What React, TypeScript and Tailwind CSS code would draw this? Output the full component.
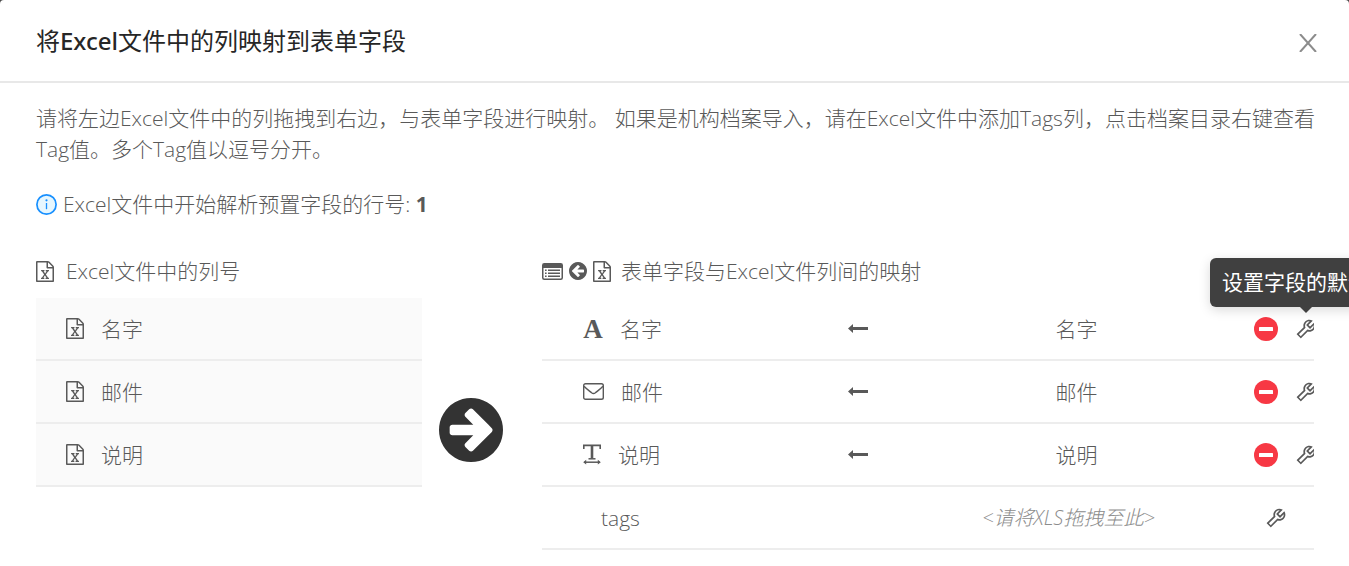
import { ReactNode } from 'react'
import { AiOutlineTool } from 'react-icons/ai'

interface MappingRow {
  id: string
  label: string
  value: string
  icon: ReactNode
}

function ExcelIcon() {
  return (
    <svg viewBox="128 0 1536 1792" className="h-[21px] w-[18px] shrink-0" fill="currentColor" aria-hidden="true">
      <path d="M1596 380q28 28 48 76t20 88v1152q0 40-28 68t-68 28h-1344q-40 0-68-28t-28-68v-1600q0-40 28-68t68-28h896q40 0 88 20t76 48zm-444-244v376h376q-10-29-22-41l-313-313q-12-12-41-22zm384 1528v-1024h-416q-40 0-68-28t-28-68v-416h-768v1536h1280zm-979-234v106h281v-106h-75l103-161q5-7 10-16.5t7.5-13.5 3.5-4h2q1 4 5 10 2 4 4.5 7.5t6 8 6.5 8.5l107 161h-76v106h291v-106h-68l-192-273 195-282h67v-107h-279v107h74l-103 159q-4 7-10 16.5t-9 13.5l-2 3h-2q-1-4-5-10-6-11-17-23l-106-159h76v-107h-290v107h68l189 272-194 283h-68z" />
    </svg>
  )
}

function CircleArrowIcon({ className }: { className: string }) {
  return (
    <svg viewBox="128 128 1536 1536" className={className} fill="currentColor" aria-hidden="true">
      <path d="M1413 896q0-27-18-45l-91-91-362-362q-18-18-45-18t-45 18l-91 91q-18 18-18 45t18 45l189 189h-502q-26 0-45 19t-19 45v128q0 26 19 45t45 19h502l-189 189q-19 19-19 45t19 45l91 91q18 18 45 18t45-18l362-362 91-91q18-18 18-45zm251 0q0 209-103 385.5t-279.5 279.5-385.5 103-385.5-103-279.5-279.5-103-385.5 103-385.5 279.5-279.5 385.5-103 385.5 103 279.5 279.5 103 385.5z" />
    </svg>
  )
}

function ListIcon() {
  return (
    <svg viewBox="0 0 21 17" className="h-[17px] w-[21px] shrink-0" fill="none" stroke="currentColor" aria-hidden="true">
      <rect x="0.75" y="0.75" width="19.5" height="15.5" rx="1.5" strokeWidth="1.5" />
      <path d="M1 1h19v4H1z" fill="currentColor" stroke="none" />
      <path d="M3 7.2h1.6M3 10.2h1.6M3 13.2h1.6M6 7.2h12M6 10.2h12M6 13.2h12" strokeWidth="1.4" />
    </svg>
  )
}

function InfoIcon() {
  return (
    <svg viewBox="0 0 21 21" className="h-[21px] w-[21px] shrink-0" aria-hidden="true">
      <circle cx="10.5" cy="10.5" r="9.6" fill="#e6f7ff" stroke="#1890ff" strokeWidth="1.7" />
      <path d="M10.5 9v6.2" stroke="#1890ff" strokeWidth="1.3" />
      <circle cx="10.5" cy="6.3" r="1.1" fill="#1890ff" />
    </svg>
  )
}

function LetterIcon() {
  return (
    <span className="w-5 text-center font-['Liberation_Serif',serif] text-[27px] leading-6 font-bold" aria-hidden="true">
      A
    </span>
  )
}

function MailIcon() {
  return (
    <svg viewBox="0 0 21 17" className="h-[17px] w-[21px]" fill="none" stroke="currentColor" strokeWidth="1.4" aria-hidden="true">
      <rect x="0.7" y="0.7" width="19.6" height="15.6" rx="1.8" />
      <path d="M1 3.2c2.5 2.6 5.2 4.6 7.6 6.6 1.3 1 2.5 1 3.8 0 2.4-2 5.1-4 7.6-6.6" />
    </svg>
  )
}

function TextWidthIcon() {
  return (
    <svg viewBox="0 0 18 21" className="h-[21px] w-[18px]" fill="none" stroke="currentColor" aria-hidden="true">
      <path d="M.8 5V1.4h16.4V5" strokeWidth="1.6" />
      <path d="M9 1.5v13" strokeWidth="2.6" />
      <path d="M5.5 14.8h7" strokeWidth="1.5" />
      <path d="M1.5 18.2h15" strokeWidth="1.5" />
      <path d="M3.2 15.8v4.8L.2 18.2zM14.8 15.8v4.8l3-2.4z" fill="currentColor" stroke="none" />
    </svg>
  )
}

function LongArrowIcon() {
  return (
    <svg viewBox="0 0 20 11" className="h-[11px] w-5" fill="currentColor" aria-hidden="true">
      <path d="M0 5.5 5 1v3h15v3H5v3z" />
    </svg>
  )
}

const columns = ['名字', '邮件', '说明']

const mappings: MappingRow[] = [
  { id: 'name', label: '名字', value: '名字', icon: <LetterIcon /> },
  { id: 'mail', label: '邮件', value: '邮件', icon: <MailIcon /> },
  { id: 'desc', label: '说明', value: '说明', icon: <TextWidthIcon /> },
]

const rowClass = 'grid h-[63px] grid-cols-[257fr_117fr_321fr_77fr] items-center border-b-2 border-[#ededed]'

export default function App() {
  return (
    <div className="min-h-screen overflow-hidden bg-[#4a4a4a] font-['Open_Sans','Noto_Sans_CJK_SC',sans-serif]">
      <div role="dialog" aria-labelledby="mapping-title" className="min-h-screen rounded-t-sm bg-white text-[21px] leading-8 font-light text-[#595959]">
        {/* Header */}
        <header className="flex h-[83px] items-center justify-between border-b-2 border-[#e8e8e8] pr-8 pl-9">
          <h2 id="mapping-title" className="text-2xl font-normal text-[#262626]">
            将<span className="font-['Noto_Sans'] font-medium">Excel</span>文件中的列映射到表单字段
          </h2>
          <button type="button" aria-label="关闭" className="mt-1 text-[#8c8c8c]">
            <svg viewBox="0 0 18 18" className="h-[18px] w-[18px]" fill="none" stroke="currentColor" strokeWidth="2" aria-hidden="true">
              <path d="M1 0l16 18M17 0L1 18" />
            </svg>
          </button>
        </header>

        <main className="pt-5 pr-[35px] pl-9">
          <p className="-mr-2 leading-[31px]">
            请将左边Excel文件中的列拖拽到右边，与表单字段进行映射。 如果是机构档案导入，请在Excel文件中添加Tags列，点击档案目录右键查看Tag值。多个Tag值以逗号分开。
          </p>
          <p className="mt-[23px] flex items-center gap-[6px]">
            <InfoIcon />
            <span>
              Excel文件中开始解析预置字段的行号: <b className="font-bold">1</b>
            </span>
          </p>

          <div className="mt-[35px] grid grid-cols-[1fr_120px_2fr]">
            {/* Source columns */}
            <section>
              <h3 className="flex h-8 items-center gap-3">
                <ExcelIcon />
                Excel文件中的列号
              </h3>
              <ul className="mt-[11px]">
                {columns.map((column) => (
                  <li key={column} draggable className="flex h-[63px] items-center gap-[17px] border-b-2 border-[#ededed] bg-[#fafafa] pl-[30px]">
                    <ExcelIcon />
                    {column}
                  </li>
                ))}
              </ul>
            </section>

            <div className="pt-[143px] pl-[17px]">
              <CircleArrowIcon className="h-16 w-16 text-[#333333]" />
            </div>

            {/* Field mapping */}
            <section>
              <h3 className="flex h-8 items-center gap-[6px]">
                <ListIcon />
                <CircleArrowIcon className="h-[18px] w-[18px] shrink-0 rotate-180" />
                <ExcelIcon />
                <span className="ml-1">表单字段与Excel文件列间的映射</span>
              </h3>
              <ul className="mt-[11px]">
                {mappings.map((row, index) => (
                  <li key={row.id} className={rowClass}>
                    <div className="flex items-center gap-[17px] pl-[41px]">
                      {row.icon}
                      {row.label}
                    </div>
                    <div className="flex justify-center">
                      <LongArrowIcon />
                    </div>
                    <div className="text-center">{row.value}</div>
                    <div className="relative flex min-w-0 items-center gap-4 pl-[17px]">
                      <button type="button" aria-label="删除映射" className="shrink-0">
                        <svg viewBox="0 0 24 24" className="h-6 w-6" aria-hidden="true">
                          <circle cx="12" cy="12" r="12" fill="#f73844" />
                          <rect x="5" y="10" width="14" height="4" rx="0.6" fill="#fff" />
                        </svg>
                      </button>
                      <button type="button" aria-label="设置默认值" className="min-w-0 flex-1 overflow-hidden">
                        <AiOutlineTool className="h-6 w-6 max-w-none" />
                      </button>
                      {index === 0 && (
                        <div role="tooltip" className="absolute bottom-[34px] left-[-27px] h-[49px] rounded-md bg-[#404040] px-3 leading-[49px] font-normal whitespace-nowrap text-white shadow-[0_3px_12px_rgba(0,0,0,0.15)]">
                          设置字段的默认值
                          <span className="absolute top-full left-[90px] border-x-6 border-t-6 border-x-transparent border-t-[#404040]" />
                        </div>
                      )}
                    </div>
                  </li>
                ))}
                <li className={rowClass}>
                  <div className="pl-[59px]">tags</div>
                  <div />
                  <div className="pr-4 text-center text-xl text-[#8c8c8c] italic">&lt;请将XLS拖拽至此&gt;</div>
                  <div className="flex pl-[27px]">
                    <button type="button" aria-label="设置默认值">
                      <AiOutlineTool className="h-6 w-6" />
                    </button>
                  </div>
                </li>
              </ul>
            </section>
          </div>
        </main>
      </div>
    </div>
  )
}
